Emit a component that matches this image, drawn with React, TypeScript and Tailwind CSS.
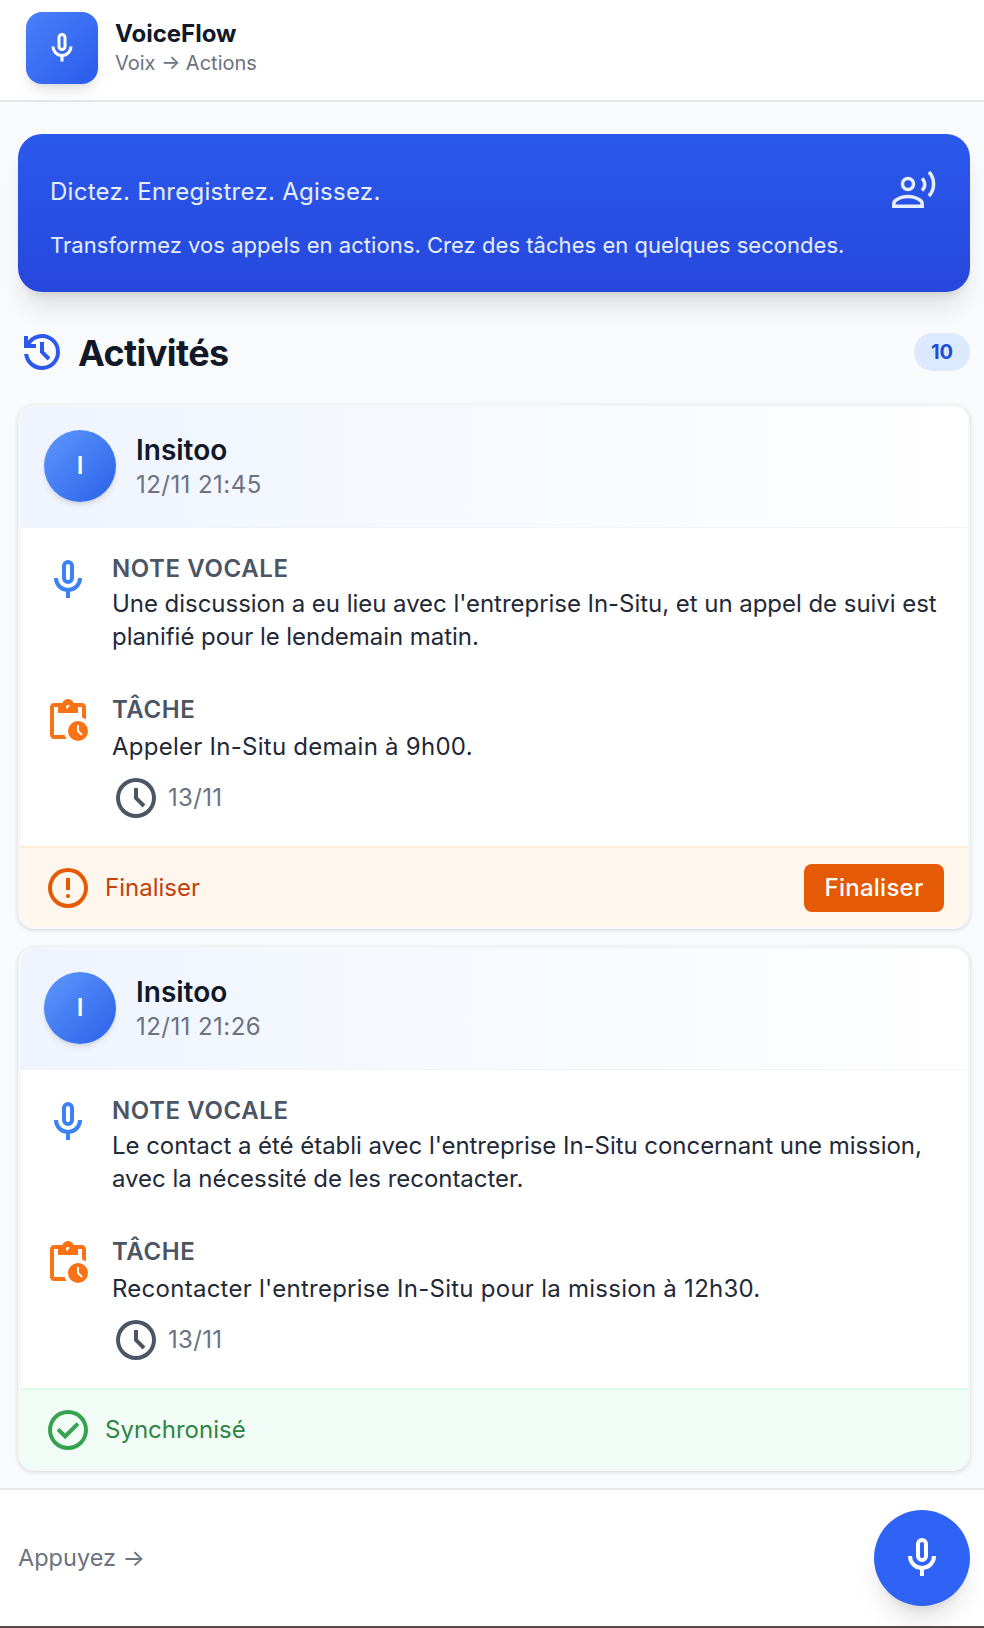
type Activity = {
  time: string
  note: string[]
  task: string
  status: 'todo' | 'synced'
}

const ACTIVITIES: Activity[] = [
  {
    time: '12/11 21:45',
    note: ["Une discussion a eu lieu avec l'entreprise In-Situ, et un appel de suivi est", 'planifié pour le lendemain matin.'],
    task: 'Appeler In-Situ demain à 9h00.',
    status: 'todo',
  },
  {
    time: '12/11 21:26',
    note: ["Le contact a été établi avec l'entreprise In-Situ concernant une mission,", 'avec la nécessité de les recontacter.'],
    task: "Recontacter l'entreprise In-Situ pour la mission à 12h30.",
    status: 'synced',
  },
]

const MIC =
  'M480-400q-50 0-85-35t-35-85v-240q0-50 35-85t85-35q50 0 85 35t35 85v240q0 50-35 85t-85 35Zm0-240Zm-40 520v-123q-104-14-172-93t-68-184h80q0 83 58.5 141.5T480-320q83 0 141.5-58.5T680-520h80q0 105-68 184t-172 93v123h-80Zm40-360q17 0 28.5-11.5T520-520v-240q0-17-11.5-28.5T480-800q-17 0-28.5 11.5T440-760v240q0 17 11.5 28.5T480-480Z'
const HISTORY =
  'M480-120q-138 0-240.5-91.5T122-440h82q14 104 92.5 172T480-200q117 0 198.5-81.5T760-480q0-117-81.5-198.5T480-760q-69 0-129 32t-101 88h110v80H120v-240h80v94q51-64 124.5-99T480-840q75 0 140.5 28.5t114 77q48.5 48.5 77 114T840-480q0 75-28.5 140.5t-77 114q-48.5 48.5-114 77T480-120Zm112-192L440-464v-216h80v184l128 128-56 56Z'
const PENDING =
  'M680-80q-83 0-141.5-58.5T480-280q0-83 58.5-141.5T680-480q83 0 141.5 58.5T880-280q0 83-58.5 141.5T680-80Zm67-105 28-28-75-75v-112h-40v128l87 87Zm-547 65q-33 0-56.5-23.5T120-200v-560q0-33 23.5-56.5T200-840h167q11-35 43-57.5t70-22.5q40 0 71.5 22.5T594-840h166q33 0 56.5 23.5T840-760v250q-18-13-38-22t-42-16v-212h-80v120H280v-120h-80v560h212q7 22 16 42t22 38H200Zm280-640q17 0 28.5-11.5T520-760q0-17-11.5-28.5T480-800q-17 0-28.5 11.5T440-760q0 17 11.5 28.5T480-720Z'
const SCHEDULE =
  'm612-292 56-56-148-148v-184h-80v216l172 172ZM480-80q-83 0-156-31.5T197-197q-54-54-85.5-127T80-480q0-83 31.5-156T197-763q54-54 127-85.5T480-880q83 0 156 31.5T763-763q54 54 85.5 127T880-480q0 83-31.5 156T763-197q-54 54-127 85.5T480-80Zm0-400Zm0 320q133 0 226.5-93.5T800-480q0-133-93.5-226.5T480-800q-133 0-226.5 93.5T160-480q0 133 93.5 226.5T480-160Z'
const ERROR =
  'M480-280q17 0 28.5-11.5T520-320q0-17-11.5-28.5T480-360q-17 0-28.5 11.5T440-320q0 17 11.5 28.5T480-280Zm-40-160h80v-240h-80v240Zm40 360q-83 0-156-31.5T197-197q-54-54-85.5-127T80-480q0-83 31.5-156T197-763q54-54 127-85.5T480-880q83 0 156 31.5T763-763q54 54 85.5 127T880-480q0 83-31.5 156T763-197q-54 54-127 85.5T480-80Zm0-80q134 0 227-93t93-227q0-134-93-227t-227-93q-134 0-227 93t-93 227q0 134 93 227t227 93Zm0-320Z'
const CHECK =
  'm424-296 282-282-56-56-226 226-114-114-56 56 170 170Zm56 216q-83 0-156-31.5T197-197q-54-54-85.5-127T80-480q0-83 31.5-156T197-763q54-54 127-85.5T480-880q83 0 156 31.5T763-763q54 54 85.5 127T880-480q0 83-31.5 156T763-197q-54 54-127 85.5T480-80Zm0-80q134 0 227-93t93-227q0-134-93-227t-227-93q-134 0-227 93t-93 227q0 134 93 227t227 93Zm0-320Z'

function Sym({ d, className }: { d: string; className: string }) {
  return (
    <svg viewBox="0 -960 960 960" fill="currentColor" className={className} aria-hidden>
      <path d={d} />
    </svg>
  )
}

function VoiceIcon() {
  return (
    <svg viewBox="0 0 48 48" fill="none" stroke="currentColor" strokeWidth="3.5" className="h-12 w-12 shrink-0 text-[#e5edff]" aria-hidden>
      <circle cx="18" cy="19" r="5.5" />
      <path d="M3.8 41.2h28.4V39c0-1.8-1-3.2-2.4-4C27 33 22.5 31.5 18 31.5S9 33 6.2 35C4.8 35.8 3.8 37.2 3.8 39Z" />
      <path d="M32 13.5a8 8 0 0 1 0 12" />
      <path d="M39 7a18 18 0 0 1 0 24" />
    </svg>
  )
}

function ActivityCard({ item }: { item: Activity }) {
  return (
    <article className="overflow-hidden rounded-2xl border-2 border-[#f5f6f8] bg-white shadow-[0_1px_4px_rgba(0,0,0,0.16)]">
      <div className="flex h-[121px] items-center gap-[20px] border-b border-gray-100 bg-gradient-to-r from-[#eff4fe] to-white px-[24px] pb-[2px]">
        <div className="flex h-[72px] w-[72px] items-center justify-center rounded-full bg-gradient-to-br from-[#5f97fb] to-[#2b60eb] text-[24px] font-semibold text-white shadow-md">
          I
        </div>
        <div className="pt-[3px]">
          <p className="text-[28px] leading-[35px] font-semibold text-[#111827]">Insitoo</p>
          <p className="text-[24px] leading-[34px] tracking-[0.45px] text-[#6b7280]">{item.time}</p>
        </div>
      </div>

      <div className="pt-[24px] pr-[24px] pb-[25px] pl-[24px]">
        <div className="flex gap-[20px]">
          <Sym d={MIC} className="mt-[4px] h-12 w-12 shrink-0 text-[#3b82f6]" />
          <div>
            <p className="text-[24px] leading-[33px] font-semibold tracking-[0.6px] text-[#4b5563]">NOTE VOCALE</p>
            <p className="mt-[2px] text-[24px] leading-[33px] tracking-[-0.04px] text-[#1f2937]">
              {item.note[0]}
              <br />
              {item.note[1]}
            </p>
          </div>
        </div>
        <div className="mt-[40px] flex gap-[20px]">
          <Sym d={PENDING} className="mt-[4px] h-12 w-12 shrink-0 text-[#f97316]" />
          <div>
            <p className="text-[24px] leading-[33px] font-semibold tracking-[0.6px] text-[#4b5563]">TÂCHE</p>
            <p className="mt-[4px] text-[24px] leading-[33px] tracking-[0.26px] text-[#1f2937]">{item.task}</p>
            <div className="mt-[11px] -mb-[1px] flex items-center gap-[8px]">
              <Sym d={SCHEDULE} className="h-12 w-12 text-[#4b5563]" />
              <span className="text-[24px] tracking-[0.3px] text-[#6b7280]">13/11</span>
            </div>
          </div>
        </div>
      </div>

      {item.status === 'todo' ? (
        <div className="flex h-[81px] items-center justify-between border-t-2 border-[#ffedd5] bg-[#fff7ed] pr-[24px] pl-[24px]">
          <div className="flex items-center gap-[13px]">
            <Sym d={ERROR} className="h-12 w-12 text-[#e65a05]" />
            <span className="text-[24px] text-[#c2410c]">Finaliser</span>
          </div>
          <button className="h-[48px] w-[140px] rounded-lg bg-[#e55a06] text-[24px] font-medium tracking-[0.25px] text-white">Finaliser</button>
        </div>
      ) : (
        <div className="flex h-[81px] items-center border-t-2 border-[#dcfce7] bg-[#f2fcf6] pl-[24px]">
          <div className="flex items-center gap-[13px]">
            <Sym d={CHECK} className="h-12 w-12 text-[#36a14f]" />
            <span className="text-[24px] text-[#2e8544]">Synchronisé</span>
          </div>
        </div>
      )}
    </article>
  )
}

export default function App() {
  return (
    <div className="flex h-[1628px] flex-col overflow-hidden bg-[#f9fafb] font-['Inter',sans-serif] [font-optical-sizing:none]">
      <header className="flex h-[102px] shrink-0 items-center gap-[17px] border-b-2 border-[#e5e7eb] bg-white px-[26px] pb-[4px]">
        <div className="flex h-[72px] w-[72px] items-center justify-center rounded-2xl bg-gradient-to-br from-[#4a80fb] to-[#2b5aeb] shadow-lg">
          <Sym d={MIC} className="h-9 w-9 text-white" />
        </div>
        <div>
          <p className="text-[24px] leading-[30px] font-bold text-[#111827]">VoiceFlow</p>
          <p className="text-[20px] leading-[28px] text-[#6b7280]">Voix → Actions</p>
        </div>
      </header>

      <main className="min-h-0 flex-1 pt-[32px] pr-[14px] pl-[18px]">
        <section className="flex h-[158px] items-start justify-between rounded-3xl bg-gradient-to-b from-[#2b59ec] to-[#2647dc] pt-[31px] pr-[32px] pl-[32px] shadow-xl">
          <div className="pt-[11px] text-[#e5edff]">
            <p className="text-[24px] leading-[32px] tracking-[0.27px]">Dictez. Enregistrez. Agissez.</p>
            <p className="mt-[21px] text-[22px] leading-[32px] tracking-[0.04px]">Transformez vos appels en actions. Crez des tâches en quelques secondes.</p>
          </div>
          <VoiceIcon />
        </section>

        <div className="mt-[36px] mb-[29px] flex h-[48px] items-center justify-between">
          <div className="flex items-center gap-[12px]">
            <Sym d={HISTORY} className="h-12 w-12 text-[#2b59ec]" />
            <h2 className="pt-[1px] text-[36px] font-bold tracking-[-0.6px] text-[#111827]">Activités</h2>
          </div>
          <span className="flex h-[38px] w-[56px] items-center justify-center rounded-full bg-[#dbeafe] text-[20px] font-bold text-[#1d4ed8]">10</span>
        </div>

        <div className="flex flex-col gap-[18px]">
          {ACTIVITIES.map((item) => (
            <ActivityCard key={item.time} item={item} />
          ))}
        </div>
      </main>

      <footer className="flex h-[140px] shrink-0 items-center justify-between border-t-2 border-b-2 border-t-[#e5e7eb] border-b-[#5b4a46] bg-white pr-[14px] pl-[18px]">
        <span className="text-[23.5px] text-[#6b7280]">Appuyez →</span>
        <button className="flex h-[96px] w-[96px] items-center justify-center rounded-full bg-[#2f63f5] shadow-xl">
          <Sym d={MIC} className="h-12 w-12 text-white" />
        </button>
      </footer>
    </div>
  )
}
